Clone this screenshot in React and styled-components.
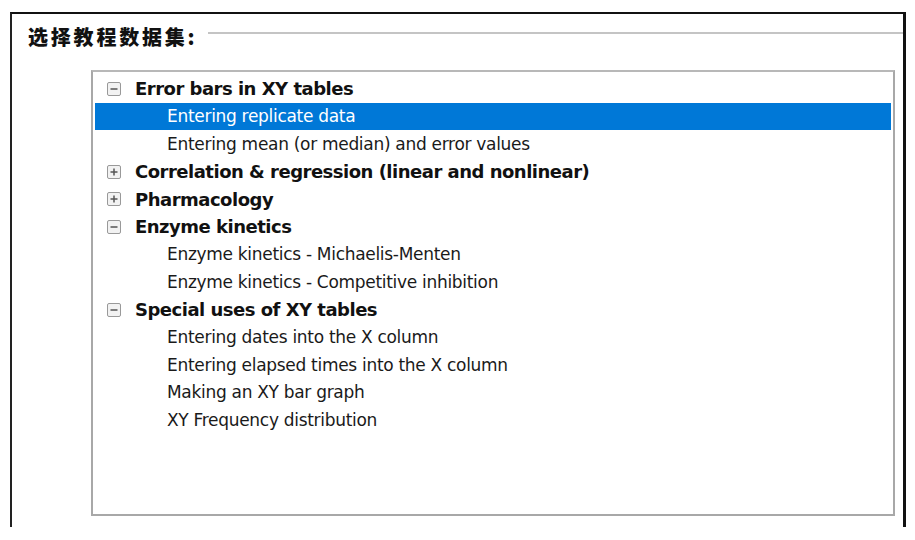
import React from 'react'
import styled, { createGlobalStyle } from 'styled-components'

const GlobalStyle = createGlobalStyle`
  html, body {
    margin: 0;
    padding: 0;
    background: #fff;
  }
  body {
    font-family: Tahoma, "DejaVu Sans", "Liberation Sans", sans-serif;
  }
`

const groups = [
  {
    title: 'Error bars in XY tables',
    open: true,
    items: ['Entering replicate data', 'Entering mean (or median) and error values'],
  },
  { title: 'Correlation & regression (linear and nonlinear)', open: false, items: [] },
  { title: 'Pharmacology', open: false, items: [] },
  {
    title: 'Enzyme kinetics',
    open: true,
    items: ['Enzyme kinetics - Michaelis-Menten', 'Enzyme kinetics - Competitive inhibition'],
  },
  {
    title: 'Special uses of XY tables',
    open: true,
    items: [
      'Entering dates into the X column',
      'Entering elapsed times into the X column',
      'Making an XY bar graph',
      'XY Frequency distribution',
    ],
  },
]

const App = () => {
  const selected = 'Entering replicate data'

  return (
    <Page>
      <GlobalStyle />
      <Frame>
        <Header>
          <Title>选择教程数据集:</Title>
          <Rule />
        </Header>
        <ListBox>
          {groups.map(g => (
            <React.Fragment key={g.title}>
              <Row>
                <Expander>
                  <svg width="14" height="14" viewBox="0 0 14 14">
                    <rect x="0.5" y="0.5" width="13" height="13" rx="1.5" fill="#f2f2f2" stroke="#999" />
                    <line x1="3.5" y1="7" x2="10.5" y2="7" stroke="#555" strokeWidth="1.5" />
                    {!g.open && <line x1="7" y1="3.5" x2="7" y2="10.5" stroke="#555" strokeWidth="1.5" />}
                  </svg>
                </Expander>
                <GroupLabel>{g.title}</GroupLabel>
              </Row>
              {g.open && g.items.map(item => (
                <ItemRow key={item} active={item === selected}>
                  {item}
                </ItemRow>
              ))}
            </React.Fragment>
          ))}
        </ListBox>
      </Frame>
    </Page>
  )
}

export default App

const Page = styled.div`
  width: 915px;
  height: 540px;
  padding: 12px 0 0 10px;
  box-sizing: border-box;
`

const Frame = styled.div`
  width: 896px;
  height: 515px;
  box-sizing: border-box;
  border-top: 2px solid #111;
  border-left: 2px solid #222;
  border-right: 3px solid #111;
  padding: 0 0 0 79px;
`

const Header = styled.div`
  display: flex;
  align-items: center;
  margin-left: -63px;
  height: 40px;
  margin-top: 2px;
  margin-bottom: 14px;
`

const Title = styled.div`
  font-family: "Noto Sans CJK SC", sans-serif;
  font-weight: 900;
  font-size: 20px;
  letter-spacing: 2.8px;
  color: #111;
  white-space: nowrap;
`

const Rule = styled.div`
  flex: 1;
  height: 2px;
  background: #c4c4c4;
  margin-left: 11px;
  margin-top: -6px;
`

const ListBox = styled.div`
  width: 804px;
  height: 446px;
  box-sizing: border-box;
  border: 2px solid #a8a8a8;
  border-top-color: #b8b8b8;
  padding: 3px 2px 0 2px;
`

const Row = styled.div`
  display: flex;
  align-items: center;
  height: 27.6px;
  padding-left: 12px;
`

const Expander = styled.span`
  display: inline-flex;
  width: 14px;
  height: 14px;
  margin-right: 14px;
`

const GroupLabel = styled.span`
  font-weight: 700;
  font-size: 18px;
  letter-spacing: -0.5px;
  color: #111;
  white-space: nowrap;
`

const ItemRow = styled.div`
  height: 27.6px;
  display: flex;
  align-items: center;
  padding-left: 72px;
  font-size: 17px;
  letter-spacing: -0.3px;
  white-space: nowrap;
  color: ${props => props.active ? '#fff' : '#1a1a1a'};
  background: ${props => props.active ? '#0078d7' : 'transparent'};
`
